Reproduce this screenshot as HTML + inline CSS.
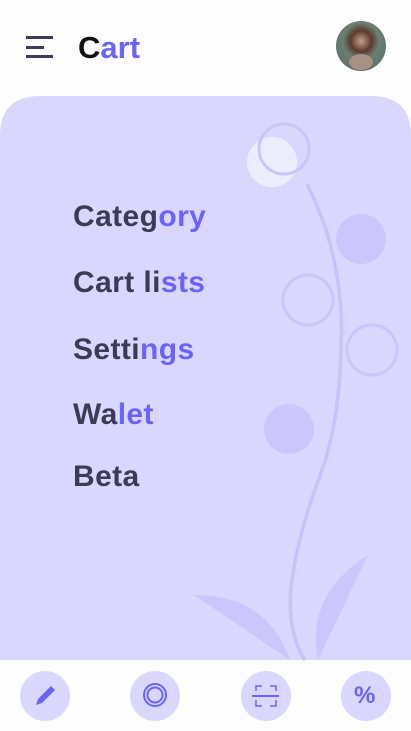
<!DOCTYPE html>
<html><head><meta charset="utf-8"><style>
body{margin:0;width:411px;height:731px;background:#fdfdfe;position:relative;overflow:hidden;font-family:"Liberation Sans",sans-serif;font-weight:bold}
.t{position:absolute;left:73px;font-size:30px;letter-spacing:0.4px;color:#3d3a55;line-height:1}
.t span{color:#6c63ff}
</style></head><body>
<svg width="411" height="731" style="position:absolute;left:0;top:0">
<g fill="#3d3a55"><rect x="26" y="36" width="27" height="3"/><rect x="26" y="46" width="18" height="3"/><rect x="26" y="55" width="27" height="3"/></g>
<defs><radialGradient id="av" cx="50%" cy="40%" r="60%"><stop offset="0" stop-color="#c9a08a"/><stop offset="0.35" stop-color="#5b3b2e"/><stop offset="0.6" stop-color="#6b7f73"/><stop offset="1" stop-color="#5e7268"/></radialGradient></defs>
<circle cx="361" cy="46" r="25" fill="url(#av)"/>
<ellipse cx="361" cy="62" rx="12" ry="8" fill="#a89180"/>
<path d="M0 136 Q0 96 40 96 L371 96 Q411 96 411 136 L411 660 L0 660Z" fill="#dad7fe"/>
<circle cx="272" cy="162" r="25" fill="#ececfd"/>
<circle cx="284" cy="149" r="25" fill="none" stroke="#c9c5fd" stroke-width="3"/>
<circle cx="361" cy="239" r="25" fill="#cbc7fd"/>
<circle cx="308" cy="300" r="25" fill="none" stroke="#c9c5fd" stroke-width="3"/>
<circle cx="372" cy="350" r="25" fill="none" stroke="#c9c5fd" stroke-width="3"/>
<circle cx="289" cy="429" r="25" fill="#cbc7fd"/>
<path d="M307 184 Q345 260 341 345 Q340 420 322 470 Q283 575 292 625 Q296 648 305 660" fill="none" stroke="#c6c2fc" stroke-width="3.5"/>
<path d="M194 595 Q268 595 290 660 Z" fill="#cbc7fd"/>
<path d="M368 555 Q305 595 318 660 Z" fill="#cbc7fd"/>
<g fill="#dad7fe"><circle cx="45" cy="696" r="25"/><circle cx="155" cy="696" r="25"/><circle cx="266" cy="696" r="25"/><circle cx="366" cy="696" r="25"/></g>
<path d="M36 705 L38 699 L51 686 L55 690 L42 703 Z" fill="#6c63ff"/>
<circle cx="155" cy="695" r="11" fill="none" stroke="#6c63ff" stroke-width="2"/>
<circle cx="155" cy="695" r="7.5" fill="none" stroke="#6c63ff" stroke-width="2"/>
<g fill="none" stroke="#6c63ff" stroke-width="1.5"><path d="M256 691 V686 H262 M270 686 H276 V691 M256 700 V706 H262 M270 706 H276 V700"/></g>
<rect x="252" y="695" width="27" height="2" fill="#6c63ff"/>
</svg>
<div style="position:absolute;left:78px;top:32px;font-size:31px;line-height:1;color:#111"><span>C</span><span style="color:#6c63ff">art</span></div>
<div style="position:absolute;left:354px;top:684px;font-size:24px;color:#6c63ff;line-height:1">%</div>
<div class="t" style="top:202px">Categ<span>ory</span></div>
<div class="t" style="top:268px">Cart li<span>sts</span></div>
<div class="t" style="top:335px">Setti<span>ngs</span></div>
<div class="t" style="top:400px">Wa<span>let</span></div>
<div class="t" style="top:462px">Beta</div>
</body></html>
